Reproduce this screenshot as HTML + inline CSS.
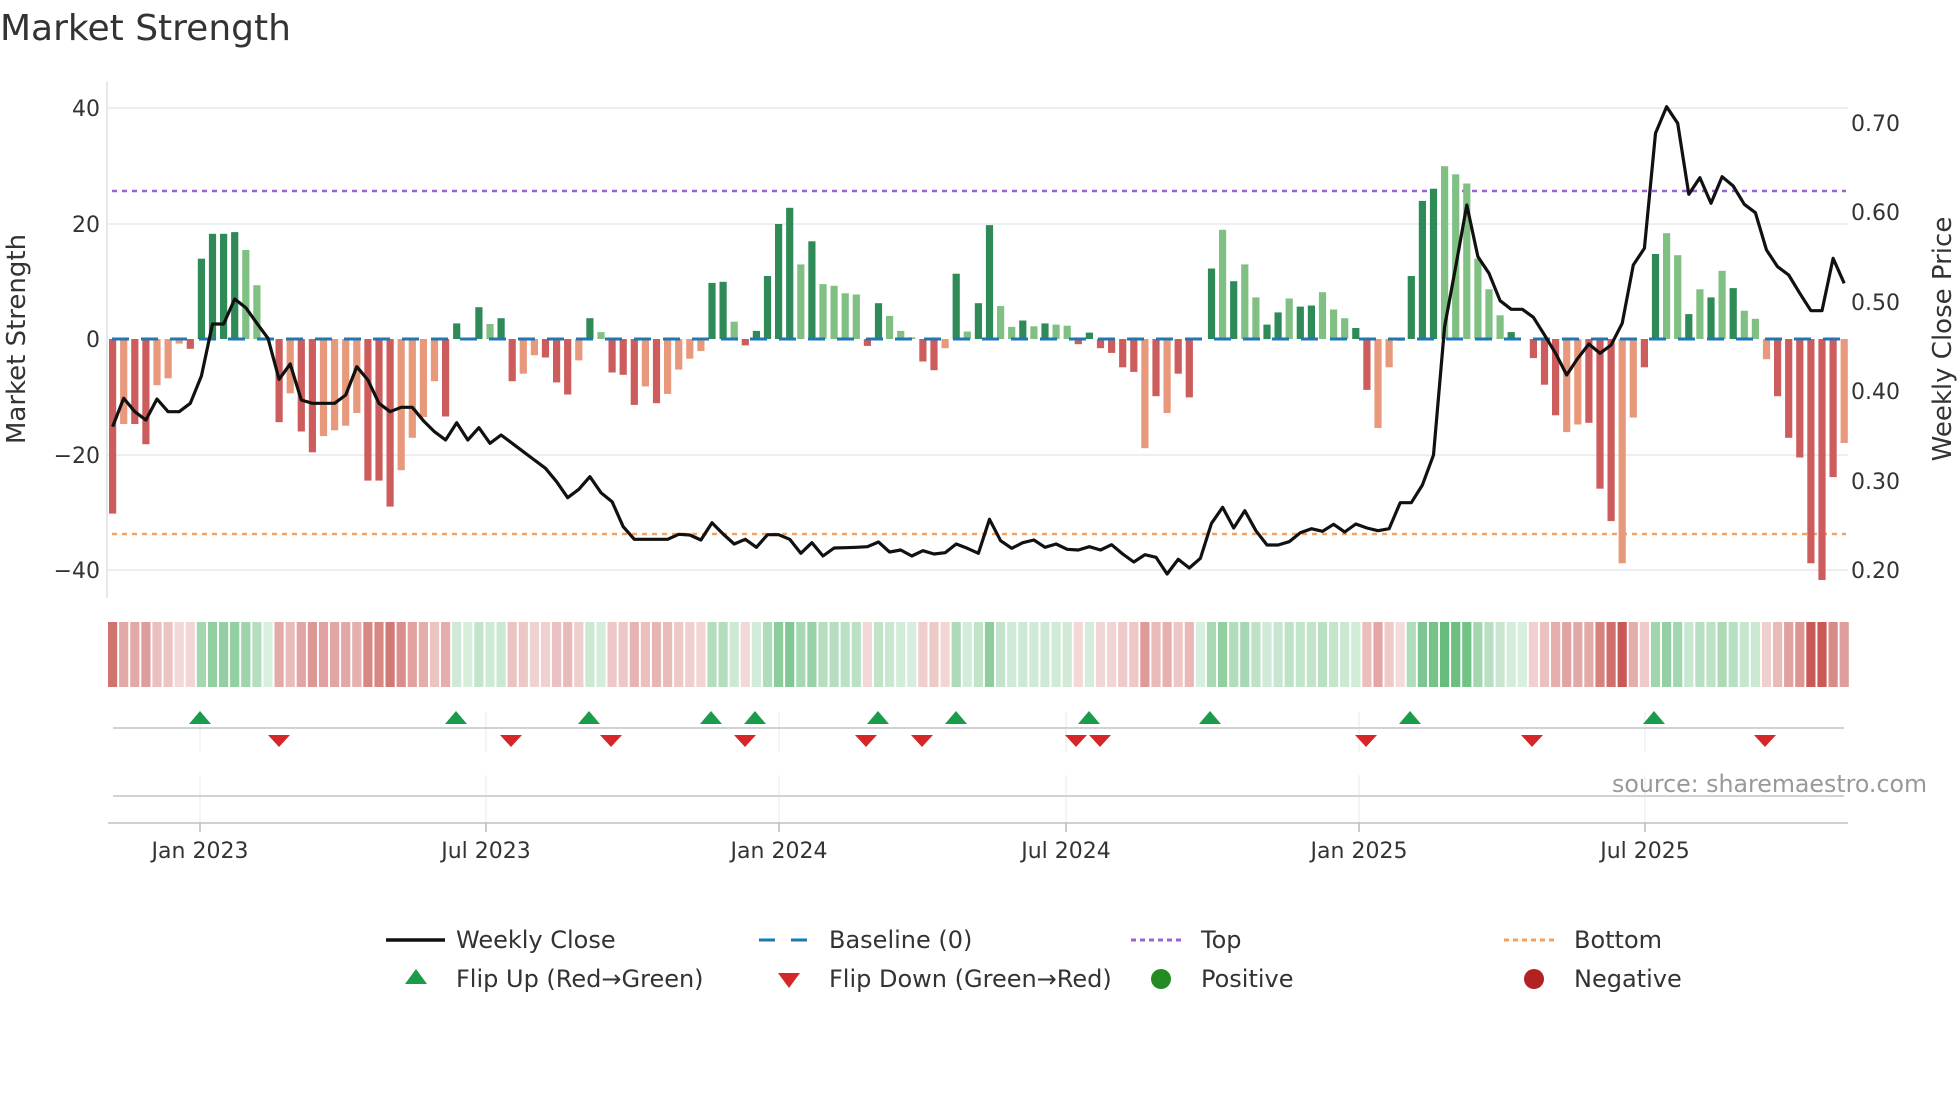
<!DOCTYPE html>
<html><head><meta charset="utf-8">
<style>
html,body{margin:0;padding:0;background:#fff;}
body{width:1960px;height:1102px;overflow:hidden;font-family:"DejaVu Sans","Liberation Sans",sans-serif;}
svg text{font-family:"DejaVu Sans","Liberation Sans",sans-serif;}
</style></head>
<body>
<svg id="c" width="1960" height="1102" viewBox="0 0 1960 1102" xmlns="http://www.w3.org/2000/svg">
<text x="0" y="40" font-size="36" fill="#333">Market Strength</text>
<g stroke="#eceff2" stroke-width="2">
<line x1="108" y1="108" x2="1848" y2="108"/>
<line x1="108" y1="224" x2="1848" y2="224"/>
<line x1="108" y1="455" x2="1848" y2="455"/>
<line x1="108" y1="570" x2="1848" y2="570"/>
</g>
<line x1="107" y1="81" x2="107" y2="598" stroke="#e6e8ea" stroke-width="2"/>
<g font-size="22" fill="#333" text-anchor="end">
<text x="100" y="116">40</text>
<text x="100" y="232">20</text>
<text x="100" y="347">0</text>
<text x="100" y="463">−20</text>
<text x="100" y="578">−40</text>
</g>
<g font-size="22" fill="#333">
<text x="1851" y="131">0.70</text>
<text x="1851" y="220">0.60</text>
<text x="1851" y="310">0.50</text>
<text x="1851" y="399">0.40</text>
<text x="1851" y="489">0.30</text>
<text x="1851" y="578">0.20</text>
</g>
<text transform="translate(25,339) rotate(-90)" font-size="26" fill="#333" text-anchor="middle">Market Strength</text>
<text transform="translate(1951,339) rotate(-90)" font-size="26" fill="#333" text-anchor="middle">Weekly Close Price</text>
<line x1="112" y1="191" x2="1846" y2="191" stroke="#9b63d6" stroke-width="2.5" stroke-dasharray="5 5"/>
<line x1="112" y1="534" x2="1846" y2="534" stroke="#f4a261" stroke-width="2.5" stroke-dasharray="5 5"/>
<g id="bars"></g>
<line x1="112" y1="339" x2="1846" y2="339" stroke="#1f77b4" stroke-width="3" stroke-dasharray="17 12"/>
<polyline id="price" fill="none" stroke="#111" stroke-width="3.2" stroke-linejoin="round"/>
<g id="heat"></g>
<g stroke="#eef0f2" stroke-width="1.5">
<line x1="200" y1="712" x2="200" y2="752"/><line x1="486" y1="712" x2="486" y2="752"/><line x1="779" y1="712" x2="779" y2="752"/><line x1="1066" y1="712" x2="1066" y2="752"/><line x1="1359" y1="712" x2="1359" y2="752"/><line x1="1645" y1="712" x2="1645" y2="752"/>
<line x1="200" y1="775" x2="200" y2="828"/><line x1="486" y1="775" x2="486" y2="828"/><line x1="779" y1="775" x2="779" y2="828"/><line x1="1066" y1="775" x2="1066" y2="828"/><line x1="1359" y1="775" x2="1359" y2="828"/><line x1="1645" y1="775" x2="1645" y2="828"/>
</g>
<line x1="113" y1="728" x2="1844" y2="728" stroke="#d0d2d4" stroke-width="2"/>
<line x1="113" y1="796" x2="1844" y2="796" stroke="#d0d2d4" stroke-width="2"/>
<line x1="108" y1="823" x2="1848" y2="823" stroke="#cfd1d3" stroke-width="2"/>
<g id="marks"></g>
<g stroke="#bbb" stroke-width="1.5">
<line x1="200" y1="823" x2="200" y2="832"/><line x1="486" y1="823" x2="486" y2="832"/><line x1="779" y1="823" x2="779" y2="832"/><line x1="1066" y1="823" x2="1066" y2="832"/><line x1="1359" y1="823" x2="1359" y2="832"/><line x1="1645" y1="823" x2="1645" y2="832"/>
</g>
<g font-size="22" fill="#333" text-anchor="middle">
<text x="200" y="858">Jan 2023</text>
<text x="486" y="858">Jul 2023</text>
<text x="779" y="858">Jan 2024</text>
<text x="1066" y="858">Jul 2024</text>
<text x="1359" y="858">Jan 2025</text>
<text x="1645" y="858">Jul 2025</text>
</g>
<text x="1612" y="792" font-size="23.7" fill="#999">source: sharemaestro.com</text>
<g font-size="24" fill="#333">
<line x1="386" y1="940" x2="445" y2="940" stroke="#111" stroke-width="3.5"/>
<text x="456" y="948">Weekly Close</text>
<line x1="759" y1="940" x2="812" y2="940" stroke="#1f77b4" stroke-width="3" stroke-dasharray="16 16"/>
<text x="829" y="948">Baseline (0)</text>
<line x1="1131" y1="940" x2="1185" y2="940" stroke="#9b63d6" stroke-width="3" stroke-dasharray="5 4"/>
<text x="1201" y="948">Top</text>
<line x1="1504" y1="940" x2="1557" y2="940" stroke="#f4a261" stroke-width="3" stroke-dasharray="5 4"/>
<text x="1574" y="948">Bottom</text>
<polygon points="416,969 405,984 427,984" fill="#1a9c4a"/>
<text x="456" y="987">Flip Up (Red→Green)</text>
<polygon points="778,973 800,973 789,988" fill="#d62728"/>
<text x="829" y="987">Flip Down (Green→Red)</text>
<circle cx="1161" cy="979" r="10" fill="#228b22"/>
<text x="1201" y="987">Positive</text>
<circle cx="1534" cy="979" r="10" fill="#b22222"/>
<text x="1574" y="987">Negative</text>
</g>
</svg>
<script>
var vals=[-30.2,-14.7,-14.7,-18.2,-8,-6.8,-0.8,-1.7,13.9,18.2,18.2,18.5,15.4,9.3,0,-14.4,-9.4,-16,-19.6,-16.8,-15.8,-15,-12.8,-24.5,-24.5,-29,-22.7,-17.1,-13.5,-7.3,-13.4,2.7,0.2,5.5,2.6,3.6,-7.3,-6,-2.8,-3.2,-7.5,-9.6,-3.7,3.6,1.2,-5.8,-6.2,-11.4,-8.2,-11.1,-9.5,-5.3,-3.4,-2.1,
9.7,9.9,3,-1.1,1.4,10.9,19.9,22.7,12.9,16.9,9.5,9.2,7.9,7.7,-1.2,6.2,4,1.4,0.3,-3.9,-5.4,-1.6,11.3,1.3,6.2,19.7,5.7,2.1,3.2,2.2,2.7,2.5,2.3,-0.9,1.1,-1.6,-2.4,-4.9,-5.7,-18.9,-9.9,-12.8,-6,-10.1,0,12.2,18.9,10,12.9,7.2,2.5,4.6,
7,5.6,5.8,8.1,5.1,3.6,1.9,-8.8,-15.4,-4.9,-0.3,10.9,23.9,26,29.9,28.5,26.9,13.9,8.6,4.1,1.2,0,-3.3,-7.9,-13.2,-16.1,-14.8,-14.5,-25.9,-31.5,-38.8,-13.6,-4.9,14.7,18.3,14.5,4.3,8.6,7.2,11.8,8.8,4.9,3.5,-3.5,-9.9,-17.1,-20.5,-38.8,-41.7,-23.9,-18];
var dl="DLDDLLLDDDDDLL_DLDDLLLLDDDLLLLDDLDLDDLLDDDLDLDDDLDLLLL"+
"DDLDDDDDLDLLLLDDLLLDDLDLDDLLDLDLLDDDDDDLDLD_DDLDLLD"+
"DLDDLLLDDLLDDDDLLLLLL_DDDDLLDDDLLDDLLDLDLDLLLDDDDDDLL";
var py=[1040,955,995,1020,957,995,995,970,888,732,732,657,683,730,775,898,852,960,970,970,970,945,860,900,970,995,982,982,1022,1055,1080,1028,1080,1043,1090,1065,1090,1115,1140,1165,1205,1253,1228,1190,1238,1265,1340,1378,1378,1378,1378,1363,1365,1380,
1328,1362,1392,1378,1402,1364,1364,1378,1420,1388,1428,1404,1403,1402,1400,1386,1416,1410,1428,1412,1422,1418,1392,1405,1420,1318,1382,1405,1388,1380,1402,1392,1408,1410,1400,1410,1394,1422,1446,1424,1432,1482,1438,1464,1435,1330,1282,1344,1292,1352,1395,1395,
1385,1358,1346,1354,1333,1356,1332,1344,1352,1346,1268,1268,1215,1125,740,560,375,530,580,662,688,688,712,765,820,885,835,792,820,795,730,555,505,160,80,130,343,293,370,290,318,373,398,510,560,585,640,692,692,535,610];
var ns="http://www.w3.org/2000/svg";
function el(p,t,a){var e=document.createElementNS(ns,t);for(var k in a)e.setAttribute(k,a[k]);p.appendChild(e);return e;}
var bars=document.getElementById('bars'),heat=document.getElementById('heat');
function X(i){return 112.6+i*11.1;}
function mix(c,t){return 'rgb('+c.map(function(v){return Math.round(255+(v-255)*t)}).join(',')+')';}
var pts=[];
for(var i=0;i<vals.length;i++){
 var v=vals[i],x=X(i),d=dl[i]||'D',h=Math.abs(v)*5.78;
 var col;
 if(v>=0) col=(d=='L')?'#80c183':'#2e8b57'; else col=(d=='L')?'#e8987b':'#cd5c5c';
 if(h>0.5) el(bars,'rect',{x:(x-3.6).toFixed(1),y:(v>=0?339-h:339).toFixed(1),width:7.2,height:h.toFixed(1),fill:col});
 var t=Math.min(0.85,0.18+Math.abs(v)/34*0.6);
 var hc=v>=0?mix([40,160,70],t):mix([190,60,55],t);
 el(heat,'rect',{x:(x-4.6).toFixed(1),y:622,width:9.2,height:65,fill:hc});
 pts.push(x.toFixed(1)+','+(80+py[i]/3).toFixed(1));
}
document.getElementById('price').setAttribute('points',pts.join(' '));
var m=document.getElementById('marks');
[200,456,589,711,755,878,956,1089,1210,1410,1654].forEach(function(x){el(m,'polygon',{points:x+',711 '+(x-11)+',724 '+(x+11)+',724',fill:'#1a9c4a'});});
[279,511,611,745,866,922,1076,1100,1366,1532,1765].forEach(function(x){el(m,'polygon',{points:(x-11)+',735 '+(x+11)+',735 '+x+',747',fill:'#d62728'});});
</script>
</body></html>
